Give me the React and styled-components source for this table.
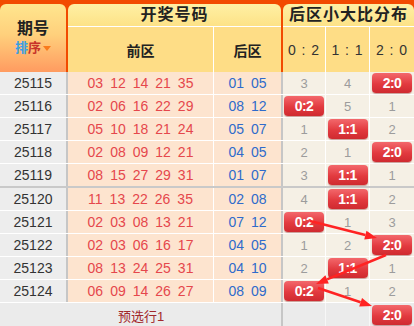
import React from 'react'
import styled, { createGlobalStyle } from 'styled-components'

const GlobalStyle = createGlobalStyle`
  html, body {
    margin: 0;
    padding: 0;
    overflow: hidden;
    background: #fff;
  }
  body {
    font-family: "Liberation Sans", Arial, "Noto Sans CJK SC", sans-serif;
  }
`

// body columns: 期号 | 前区 | 后区 | 0:2 | 1:1 | 2:0 (border included)
const COLS = '68px 146px 69px 43px 44px 44px'

//---------------header---------------//
const Wrap = styled.div`
  position: relative;
  width: 414px;
  height: 326px;
  overflow: hidden;
`
const Header = styled.div`
  display: grid;
  grid-template-columns: 66px 213px 131px;
  column-gap: 2px;
  padding-top: 4px;
  background: #f24a00;
`
const IssueHead = styled.div`
  height: 68px;
  border-radius: 6px 6px 0 0;
  background: linear-gradient(#ffe68e, #ffd07c 45%, #ff9b60);
  display: flex;
  flex-direction: column;
  align-items: center;
  justify-content: center;
`
const IssueTitle = styled.div`
  font-size: 16px;
  font-weight: bold;
  line-height: 20px;
  color: #222;
`
const SortLine = styled.div`
  display: flex;
  align-items: center;
  font-size: 13px;
  font-weight: bold;
  line-height: 18px;
`
const SortWord = styled.span`
  color: ${p => p.$color};
`
const SortCaret = styled.span`
  width: 0;
  height: 0;
  margin-left: 2px;
  border-left: 4px solid transparent;
  border-right: 4px solid transparent;
  border-top: 5px solid #f97a1c;
`
const Group = styled.div`
  border-radius: 6px 6px 0 0;
  overflow: hidden;
  display: flex;
  flex-direction: column;
`
const GroupTitle = styled.div`
  height: 22px;
  line-height: 22px;
  text-align: center;
  font-size: 16px;
  font-weight: bold;
  letter-spacing: 1px;
  color: #222;
  background: linear-gradient(#fff0a4, #fde287);
  border-bottom: 1px solid #fff;
`
const SubRow = styled.div`
  display: grid;
  grid-template-columns: ${p => p.$cols};
  height: 45px;
`
const SubCell = styled.div`
  display: flex;
  align-items: center;
  justify-content: center;
  background: #fedd86;
  border-right: ${p => (p.$last ? 'none' : '1px solid #fff')};
  font-size: ${p => (p.$ratio ? '14px' : '14px')};
  font-weight: ${p => (p.$ratio ? 'normal' : 'bold')};
  letter-spacing: ${p => (p.$ratio ? '1px' : '0')};
  color: ${p => (p.$ratio ? '#333' : '#222')};
  white-space: pre;
`

//---------------body---------------//
const Row = styled.div`
  display: grid;
  grid-template-columns: ${COLS};
  height: 22px;
  border-bottom: ${p => (p.$groupEnd ? '2px solid #c9c9c9' : '1px solid #fff')};
`
const IssueCell = styled.div`
  background: #ededed;
  border-right: 2px solid #c6c6c6;
  text-align: center;
  line-height: 22px;
  font-size: 14px;
  color: #333;
`
const BallCell = styled.div`
  display: flex;
  align-items: center;
  justify-content: center;
  gap: 7px;
  background: #fde4cf;
  border-right: ${p => (p.$back ? '2px solid #c6c6c6' : '1px solid #fff')};
  font-size: 14px;
  color: ${p => (p.$back ? '#2f6bcb' : '#e5474c')};
`
const DistCell = styled.div`
  display: flex;
  align-items: center;
  justify-content: center;
  background: #f5f0e5;
  border-right: ${p => (p.$last ? 'none' : '1px solid #fff')};
  font-size: 13px;
  color: #9c9c9c;
`
const Badge = styled.span`
  width: 40px;
  height: 20px;
  line-height: 20px;
  text-align: center;
  border-radius: 4px;
  background: linear-gradient(#f3686c, #e23a3f 55%, #cf2a30);
  box-shadow: 0 1px 1px rgba(120, 0, 0, 0.35);
  color: #fff;
  font-size: 14px;
  font-weight: bold;
  letter-spacing: -0.5px;
`

//---------------footer---------------//
const Footer = styled.div`
  display: grid;
  grid-template-columns: ${COLS};
  height: 24px;
  background: #ebebeb;
`
const FootCell = styled.div`
  display: flex;
  align-items: center;
  justify-content: center;
  border-right: ${p => p.$border || 'none'};
  font-size: 13px;
  color: #a2282c;
`

const ArrowLayer = styled.svg`
  position: absolute;
  left: 0;
  top: 0;
  pointer-events: none;
`

const draws = [
  { no: '25115', front: ['03', '12', '14', '21', '35'], back: ['01', '05'], dist: ['3', '4', 2] },
  { no: '25116', front: ['02', '06', '16', '22', '29'], back: ['08', '12'], dist: [0, '5', '1'] },
  { no: '25117', front: ['05', '10', '18', '21', '24'], back: ['05', '07'], dist: ['1', 1, '2'] },
  { no: '25118', front: ['02', '08', '09', '12', '21'], back: ['04', '05'], dist: ['2', '1', 2] },
  { no: '25119', front: ['08', '15', '27', '29', '31'], back: ['01', '07'], dist: ['3', 1, '1'] },
  { no: '25120', front: ['11', '13', '22', '26', '35'], back: ['02', '08'], dist: ['4', 1, '2'] },
  { no: '25121', front: ['02', '03', '08', '13', '21'], back: ['07', '12'], dist: [0, '1', '3'] },
  { no: '25122', front: ['02', '03', '06', '16', '17'], back: ['04', '05'], dist: ['1', '2', 2] },
  { no: '25123', front: ['08', '13', '24', '25', '31'], back: ['04', '10'], dist: ['2', 1, '1'] },
  { no: '25124', front: ['06', '09', '14', '26', '27'], back: ['08', '09'], dist: [0, '1', '2'] },
]

const LABELS = ['0:2', '1:1', '2:0']

const arrows = [
  [310, 221, 377, 238],
  [386, 255, 316, 284],
  [318, 288, 372, 306],
]

function Arrow({ x1, y1, x2, y2 }) {
  const a = Math.atan2(y2 - y1, x2 - x1)
  const len = 12
  const half = 4.5
  const bx = x2 - Math.cos(a) * len
  const by = y2 - Math.sin(a) * len
  const px = -Math.sin(a) * half
  const py = Math.cos(a) * half
  return (
    <g>
      <line x1={x1} y1={y1} x2={bx} y2={by} stroke="#ff2323" strokeWidth="2.5" />
      <polygon
        points={`${x2},${y2} ${bx + px},${by + py} ${bx - px},${by - py}`}
        fill="#ff2323"
      />
    </g>
  )
}

export default function App() {
  return (
    <>
      <GlobalStyle />
      <Wrap>
        <Header>
          <IssueHead>
            <IssueTitle>期号</IssueTitle>
            <SortLine>
              <SortWord $color="#3a9ee3">排</SortWord>
              <SortWord $color="#c8342a">序</SortWord>
              <SortCaret />
            </SortLine>
          </IssueHead>
          <Group>
            <GroupTitle>开奖号码</GroupTitle>
            <SubRow $cols="146px 67px">
              <SubCell>前区</SubCell>
              <SubCell $last>后区</SubCell>
            </SubRow>
          </Group>
          <Group>
            <GroupTitle>后区小大比分布</GroupTitle>
            <SubRow $cols="43px 44px 44px">
              <SubCell $ratio>0 : 2</SubCell>
              <SubCell $ratio>1 : 1</SubCell>
              <SubCell $ratio $last>2 : 0</SubCell>
            </SubRow>
          </Group>
        </Header>

        {draws.map((d, i) => (
          <Row key={d.no} $groupEnd={i === 4}>
            <IssueCell>{d.no}</IssueCell>
            <BallCell>
              {d.front.map(n => <span key={n}>{n}</span>)}
            </BallCell>
            <BallCell $back>
              {d.back.map(n => <span key={n}>{n}</span>)}
            </BallCell>
            {d.dist.map((v, j) => (
              <DistCell key={j} $last={j === 2}>
                {typeof v === 'number' ? <Badge>{LABELS[v]}</Badge> : v}
              </DistCell>
            ))}
          </Row>
        ))}

        <Footer>
          <FootCell />
          <FootCell>预选行1</FootCell>
          <FootCell $border="2px solid #c6c6c6" />
          <FootCell $border="1px solid #f7f7f7" />
          <FootCell $border="1px solid #f7f7f7" />
          <FootCell>
            <Badge>2:0</Badge>
          </FootCell>
        </Footer>

        <ArrowLayer width="414" height="326" viewBox="0 0 414 326">
          {arrows.map(([x1, y1, x2, y2], i) => (
            <Arrow key={i} x1={x1} y1={y1} x2={x2} y2={y2} />
          ))}
        </ArrowLayer>
      </Wrap>
    </>
  )
}
